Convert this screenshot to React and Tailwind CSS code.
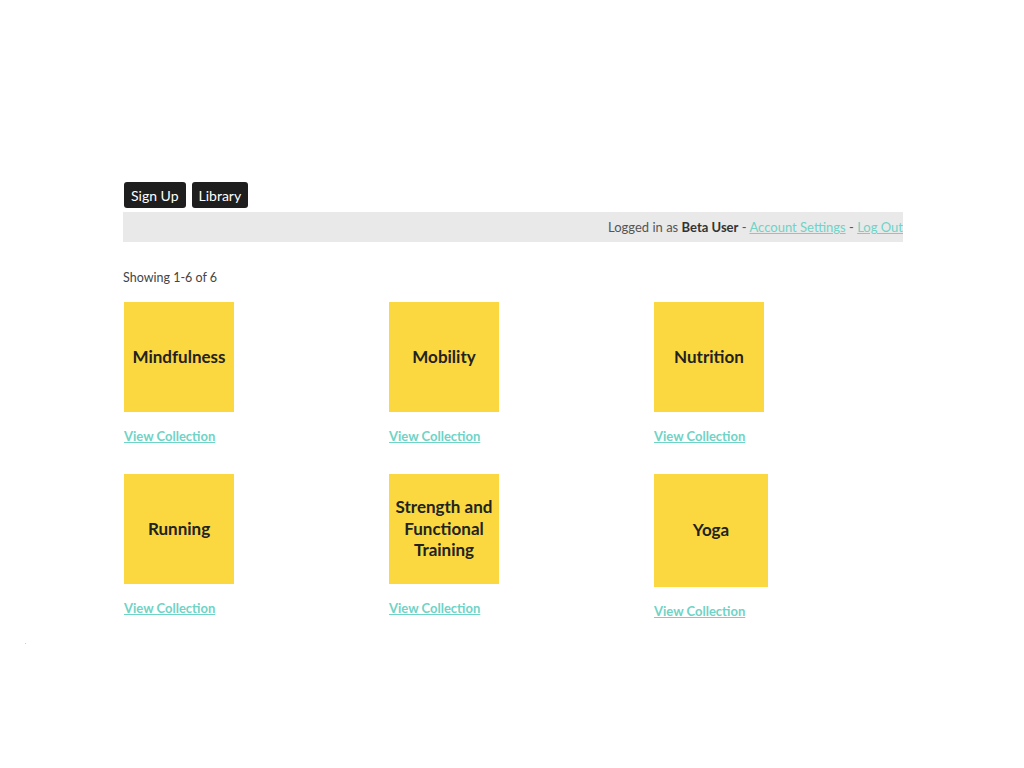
import React from "react";

const collections = [
  { name: "Mindfulness" },
  { name: "Mobility" },
  { name: "Nutrition" },
  { name: "Running" },
  { name: "Strength and Functional Training" },
  { name: "Yoga", big: true },
];

export default function App() {
  return (
    <div className="min-h-screen bg-white" style={{ fontFamily: "Lato, 'Open Sans', sans-serif" }}>
      <div className="ml-[123px] w-[780px] pt-[182px]">
        <div className="flex gap-[6px] pl-px">
          <button className="h-[26px] px-[7px] bg-[#1e1e1e] text-white text-[14px] rounded-[3px]">Sign Up</button>
          <button className="h-[26px] px-[7px] bg-[#1e1e1e] text-white text-[14px] rounded-[3px]">Library</button>
        </div>

        <div className="mt-[4px] h-[30px] pt-[2px] bg-[#e9e9e9] flex items-center justify-end overflow-hidden whitespace-nowrap text-[13px] text-[#555]">
          <span>
            Logged in as <b className="text-[#333]">Beta User</b> -{" "}
            <a href="#" className="text-[#6fd3c6] underline">Account Settings</a> -{" "}
            <a href="#" className="text-[#6fd3c6] underline">Log Out</a>
          </span>
        </div>

        <p className="mt-[28px] text-[12.5px] text-[#444] leading-4">Showing 1-6 of 6</p>

        <div className="mt-[16px] pl-px grid grid-cols-[265px_265px_250px] gap-y-[30px]">
          {collections.map((c) => (
            <div key={c.name} className="flex flex-col items-start">
              <div
                className={`${c.big ? "w-[114px] h-[113px]" : "w-[110px] h-[110px]"} bg-[#fbd83f] flex items-center justify-center text-center px-1 pb-px text-[17px] leading-[21.5px] font-bold text-[#222]`}
              >
                {c.name}
              </div>
              <a href="#" className="mt-[16px] text-[13px] leading-4 font-bold text-[#6fd3c6] underline">
                View Collection
              </a>
            </div>
          ))}
        </div>
      </div>
      <div className="absolute left-[25px] top-[643px] w-px h-px bg-[#ccc]" />
    </div>
  );
}
